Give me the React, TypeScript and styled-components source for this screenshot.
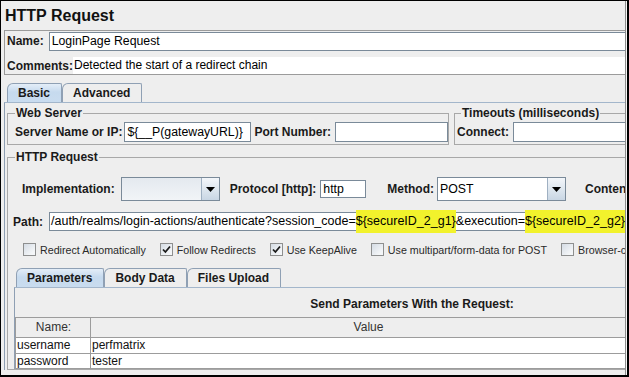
import styled, { createGlobalStyle } from 'styled-components';

const GlobalStyle = createGlobalStyle`
  html, body {
    margin: 0;
    padding: 0;
    background: #fff;
  }
  body {
    font-family: 'Liberation Sans', Arial, sans-serif;
    font-size: 12px;
    color: #000;
  }
  * {
    box-sizing: border-box;
  }
`;

const Frame = styled.div`
  width: 629px;
  height: 377px;
  border: 1px solid #000;
  border-right-width: 2px;
  border-bottom-width: 2px;
  background: #f6f6f6;
  overflow: hidden;
`;

const Window = styled.div`
  width: 625px;
  height: 100%;
  background: #eeeeee;
  border-right: 1px solid #8c8c8c;
  overflow: hidden;
`;

const Title = styled.h1`
  margin: 0;
  padding: 5px 0 4px 4px;
  font-size: 16px;
  line-height: 20px;
  font-weight: bold;
  color: #111;
`;

const NameBox = styled.div`
  margin-left: 3px;
  border: 1px solid #9b9b9b;
  border-right: none;
`;

const Row = styled.div<{ $mt?: number; $pl?: number; $h: number }>`
  display: flex;
  align-items: center;
  height: ${(p) => p.$h}px;
  margin-top: ${(p) => p.$mt ?? 0}px;
  padding-left: ${(p) => p.$pl ?? 0}px;
  white-space: nowrap;
`;

const Label = styled.span<{ $ml?: number }>`
  flex: none;
  margin-left: ${(p) => p.$ml ?? 0}px;
  font-weight: bold;
  font-size: 12px;
  color: #1a1a1a;
`;

const TextBox = styled.div<{ $w?: number; $h: number; $ml?: number; $open?: boolean }>`
  flex: ${(p) => (p.$w ? 'none' : '1')};
  width: ${(p) => (p.$w ? `${p.$w}px` : 'auto')};
  height: ${(p) => p.$h}px;
  margin-left: ${(p) => p.$ml ?? 0}px;
  padding-left: 2px;
  border: 1px solid #7a8a99;
  border-right: ${(p) => (p.$open ? 'none' : '1px solid #7a8a99')};
  background: #fff;
  font-size: 12.3px;
  line-height: ${(p) => p.$h - 2}px;
  white-space: nowrap;
`;

const CommentText = styled.div`
  flex: 1;
  height: 17px;
  padding-left: 1px;
  background: #fff;
  font-size: 12px;
  line-height: 17px;
`;

const TabBar = styled.div<{ $mt: number; $pl: number }>`
  display: flex;
  margin-top: ${(p) => p.$mt}px;
  padding-left: ${(p) => p.$pl}px;
`;

const Tab = styled.div<{ $active?: boolean }>`
  height: 19px;
  padding: 0 11px 0 10px;
  border: 1px solid #8fa0b4;
  border-bottom: none;
  border-radius: 6px 2px 0 0;
  background: ${(p) =>
    p.$active ? 'linear-gradient(#e4eef8, #c6daee 45%, #c9dcef)' : '#eeeeee'};
  font-weight: bold;
  font-size: 12px;
  line-height: 18px;
  color: #1a1a1a;
`;

const TabPanel = styled.div<{ $ml: number; $pt: number }>`
  margin-left: ${(p) => p.$ml}px;
  padding: ${(p) => p.$pt}px 0 0 2px;
  border-top: 1px solid #a3b6cb;
  border-left: 1px solid #8e9fb3;
`;

const TopRow = styled.div`
  display: flex;
  align-items: flex-start;
`;

const Group = styled.fieldset<{ $w: number; $pl: number; $ml?: number; $mt?: number }>`
  flex: none;
  width: ${(p) => p.$w}px;
  min-width: 0;
  margin: ${(p) => p.$mt ?? 0}px 0 0 ${(p) => p.$ml ?? 0}px;
  padding: 0 0 0 ${(p) => p.$pl}px;
  border: 1px solid #a8a8a8;
`;

const Legend = styled.legend<{ $ml?: number }>`
  margin-left: ${(p) => p.$ml ?? 0}px;
  padding: 0 1px;
  font-weight: bold;
  font-size: 12px;
  line-height: 14px;
  color: #1a1a1a;
`;

const Combo = styled.div<{ $w: number; $ml: number; $fill: string }>`
  flex: none;
  display: flex;
  width: ${(p) => p.$w}px;
  height: 24px;
  margin-left: ${(p) => p.$ml}px;
  border: 1px solid #7a8a99;
  background: ${(p) => p.$fill};
`;

const ComboText = styled.span`
  flex: 1;
  padding-left: 2px;
  font-size: 12.3px;
  line-height: 22px;
`;

const ComboButton = styled.span`
  flex: none;
  display: flex;
  align-items: center;
  justify-content: center;
  width: 18px;
  border-left: 1px solid #9fb0c2;
  background: linear-gradient(#f3f6fa, #dce5ee 55%, #c9d6e4);
`;

const PathText = styled.div`
  flex: 1;
  height: 19px;
  margin-left: 6px;
  padding-left: 1px;
  border: 1px solid #7a8a99;
  border-right: none;
  background: #fff;
  font-size: 12.5px;
  line-height: 17px;
  white-space: nowrap;
`;

const Mark = styled.span`
  padding: 4px 0 5px;
  background: #f2f22c;
`;

const Checks = styled.div`
  display: flex;
  align-items: center;
  gap: 14px;
  height: 13px;
  margin-top: 12px;
  padding-left: 11px;
  white-space: nowrap;
`;

const CheckItem = styled.label`
  display: flex;
  align-items: center;
  gap: 4px;
  font-size: 10.7px;
  color: #2a2a2a;
`;

const Box = styled.span`
  flex: none;
  display: flex;
  align-items: center;
  justify-content: center;
  width: 13px;
  height: 13px;
  border: 1px solid #8e8f8f;
  background: linear-gradient(135deg, #d5dce4, #f4f6f8 80%);
`;

const SubTabs = styled.div`
  margin-left: 2px;
`;

const SubPanel = styled.div`
  border-top: 1px solid #a3b6cb;
  border-left: 1px solid #8e9fb3;
`;

const Caption = styled.div`
  width: 794px;
  padding: 9px 0 6px;
  text-align: center;
  font-weight: bold;
  font-size: 12px;
  line-height: 14px;
  color: #1a1a1a;
`;

const Table = styled.div`
  width: 631px;
  border-left: 1px solid #9c9c9c;
`;

const TableRow = styled.div<{ $head?: boolean }>`
  display: grid;
  grid-template-columns: 75px 1fr;
  height: ${(p) => (p.$head ? 20 : 16)}px;
  background: ${(p) => (p.$head ? '#eeeeee' : '#fff')};
  border-top: 1px solid #9c9c9c;
  &:last-child {
    border-bottom: 1px solid #9c9c9c;
  }
`;

const Cell = styled.div<{ $head?: boolean }>`
  padding-left: 1px;
  border-right: 1px solid #9c9c9c;
  text-align: ${(p) => (p.$head ? 'center' : 'left')};
  font-size: 12px;
  line-height: ${(p) => (p.$head ? 19 : 15)}px;
  color: ${(p) => (p.$head ? '#333' : '#111')};
  white-space: nowrap;
`;

function Arrow() {
  return (
    <svg width="9" height="5" viewBox="0 0 9 5">
      <polygon points="0,0 9,0 4.5,5" fill="#000" />
    </svg>
  );
}

function Check({ checked, label }: { checked?: boolean; label: string }) {
  return (
    <CheckItem>
      <Box>
        {checked && (
          <svg width="9" height="9" viewBox="0 0 9 9">
            <path d="M1 4.5 L3.4 7 L8 1.5" stroke="#1b1b1b" strokeWidth="1.8" fill="none" />
          </svg>
        )}
      </Box>
      {label}
    </CheckItem>
  );
}

const params = [
  { name: 'username', value: 'perfmatrix' },
  { name: 'password', value: 'tester' },
];

export default function App() {
  return (
    <>
      <GlobalStyle />
      <Frame>
        <Window>
          <Title>HTTP Request</Title>

          <NameBox>
            <Row $h={20} $pl={2}>
              <Label>Name:</Label>
              <TextBox $h={19} $ml={5} $open>
                LoginPage Request
              </TextBox>
            </Row>
            <Row $h={17} $mt={6} $pl={2}>
              <Label>Comments:</Label>
              <CommentText>Detected the start of a redirect chain</CommentText>
            </Row>
          </NameBox>

          <TabBar $mt={8} $pl={6}>
            <Tab $active>Basic</Tab>
            <Tab>Advanced</Tab>
          </TabBar>

          <TabPanel $ml={3} $pt={3}>
            <TopRow>
              <Group $w={442} $pl={7}>
                <Legend>Web Server</Legend>
                <Row $h={24}>
                  <Label>Server Name or IP:</Label>
                  <TextBox $w={127} $h={20} $ml={2}>
                    {'${__P(gatewayURL)}'}
                  </TextBox>
                  <Label $ml={3}>Port Number:</Label>
                  <TextBox $w={113} $h={20} $ml={4} />
                </Row>
              </Group>
              <Group $w={300} $pl={2} $ml={5}>
                <Legend $ml={4}>Timeouts (milliseconds)</Legend>
                <Row $h={24}>
                  <Label>Connect:</Label>
                  <TextBox $w={150} $h={20} $ml={4} />
                </Row>
              </Group>
            </TopRow>

            <Group $w={720} $pl={4} $mt={5}>
              <Legend $ml={3}>HTTP Request</Legend>
              <Row $h={24} $mt={13} $pl={10}>
                <Label>Implementation:</Label>
                <Combo $w={99} $ml={6} $fill="linear-gradient(#e4e9ef, #f1f4f7)">
                  <ComboText />
                  <ComboButton>
                    <Arrow />
                  </ComboButton>
                </Combo>
                <Label $ml={10}>Protocol [http]:</Label>
                <TextBox $w={46} $h={18} $ml={4}>
                  http
                </TextBox>
                <Label $ml={21}>Method:</Label>
                <Combo $w={129} $ml={3} $fill="#fff">
                  <ComboText>POST</ComboText>
                  <ComboButton>
                    <Arrow />
                  </ComboButton>
                </Combo>
                <Label $ml={19}>Content encoding:</Label>
              </Row>

              <Row $h={19} $mt={11} $pl={1}>
                <Label>Path:</Label>
                <PathText>
                  /auth/realms/login-actions/authenticate?session_code=
                  <Mark>{'${secureID_2_g1}'}</Mark>
                  &amp;execution=
                  <Mark>{'${secureID_2_g2}'}</Mark>
                </PathText>
              </Row>

              <Checks>
                <Check label="Redirect Automatically" />
                <Check checked label="Follow Redirects" />
                <Check checked label="Use KeepAlive" />
                <Check label="Use multipart/form-data for POST" />
                <Check label="Browser-compatible headers" />
              </Checks>

              <SubTabs>
                <TabBar $mt={12} $pl={2}>
                  <Tab $active>Parameters</Tab>
                  <Tab>Body Data</Tab>
                  <Tab>Files Upload</Tab>
                </TabBar>
                <SubPanel>
                  <Caption>Send Parameters With the Request:</Caption>
                  <Table>
                    <TableRow $head>
                      <Cell $head>Name:</Cell>
                      <Cell $head>Value</Cell>
                    </TableRow>
                    {params.map((p) => (
                      <TableRow key={p.name}>
                        <Cell>{p.name}</Cell>
                        <Cell>{p.value}</Cell>
                      </TableRow>
                    ))}
                  </Table>
                </SubPanel>
              </SubTabs>
            </Group>
          </TabPanel>
        </Window>
      </Frame>
    </>
  );
}
